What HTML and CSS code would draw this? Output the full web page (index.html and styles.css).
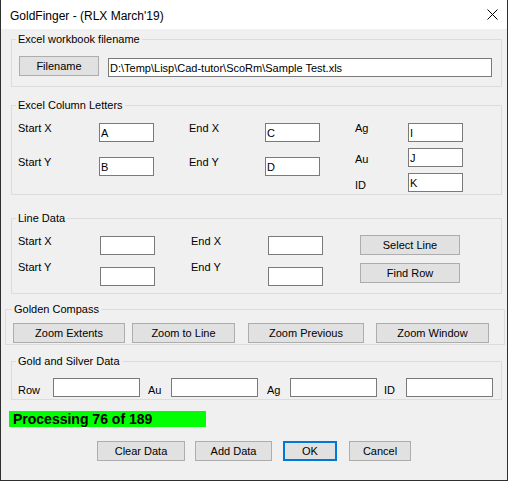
FILE: index.html
```html
<!DOCTYPE html>
<html lang="en">
<head>
  <meta charset="UTF-8">
  <title>GoldFinger</title>
  <link rel="stylesheet" href="styles.css">
</head>
<body>
  <div class="window">
    <div class="titlebar">
      <span class="title">GoldFinger - (RLX March'19)</span>
      <svg class="close" width="11" height="11" viewBox="0 0 11 11">
        <path d="M0.5 0.5 L10.5 10.5 M10.5 0.5 L0.5 10.5" stroke="#000" stroke-width="1" fill="none"/>
      </svg>
    </div>

    <div class="client">
      <fieldset class="group g-file">
        <legend>Excel workbook filename</legend>
        <div class="gbody file-row">
          <button class="btn btn-filename">Filename</button>
          <input class="txt txt-file" type="text" value="D:\Temp\Lisp\Cad-tutor\ScoRm\Sample Test.xls">
        </div>
      </fieldset>

      <fieldset class="group g-cols">
        <legend>Excel Column Letters</legend>
        <div class="gbody cols">
          <div class="lblcol pair w81"><span>Start X</span><span>Start Y</span></div>
          <div class="boxcol pair"><input class="txt" type="text" value="A"><input class="txt" type="text" value="B"></div>
          <div class="lblcol pair w76 sp35"><span>End X</span><span>End Y</span></div>
          <div class="boxcol pair"><input class="txt" type="text" value="C"><input class="txt" type="text" value="D"></div>
          <div class="lblcol trio w53 sp35"><span>Ag</span><span class="au">Au</span><span class="id">ID</span></div>
          <div class="boxcol trio"><input class="txt" type="text" value="I"><input class="txt" type="text" value="J"><input class="txt" type="text" value="K"></div>
        </div>
      </fieldset>

      <fieldset class="group g-line">
        <legend>Line Data</legend>
        <div class="gbody cols">
          <div class="lblcol line w82"><span>Start X</span><span>Start Y</span></div>
          <div class="boxcol line"><input class="txt" type="text"><input class="txt" type="text"></div>
          <div class="lblcol line w77 sp36"><span>End X</span><span>End Y</span></div>
          <div class="boxcol line"><input class="txt" type="text"><input class="txt" type="text"></div>
          <div class="btncol">
            <button class="btn btn-side">Select Line</button>
            <button class="btn btn-side">Find Row</button>
          </div>
        </div>
      </fieldset>

      <fieldset class="group g-compass">
        <legend>Golden Compass</legend>
        <div class="gbody zoom-row">
          <button class="btn z-ext">Zoom Extents</button>
          <button class="btn z-line">Zoom to Line</button>
          <button class="btn z-prev">Zoom Previous</button>
          <button class="btn z-win">Zoom Window</button>
        </div>
      </fieldset>

      <fieldset class="group g-data">
        <legend>Gold and Silver Data</legend>
        <div class="gbody data-row">
          <span class="dl w35">Row</span><input class="txt txt-data" type="text">
          <span class="dl w23 m8">Au</span><input class="txt txt-data" type="text">
          <span class="dl w23 m9">Ag</span><input class="txt txt-data" type="text">
          <span class="dl w22 m7">ID</span><input class="txt txt-data" type="text">
        </div>
      </fieldset>

      <div class="progress">Processing 76 of 189</div>

      <div class="actions">
        <button class="btn a-clear">Clear Data</button>
        <button class="btn a-add">Add Data</button>
        <button class="btn a-ok">OK</button>
        <button class="btn a-cancel">Cancel</button>
      </div>
    </div>
  </div>
</body>
</html>
```

FILE: styles.css
```css
* {
  box-sizing: border-box;
}
body {
  margin: 0;
  background: #f0f0f0;
  font-family: "Liberation Sans", Arial, sans-serif;
  font-size: 11px;
  line-height: 13px;
  color: #000;
}
.window {
  width: 508px;
  height: 481px;
  border: 1px solid #2f2f2f;
  border-top: none;
  background: #f0f0f0;
  display: flex;
  flex-direction: column;
}
.titlebar {
  flex: none;
  height: 29px;
  background: #fff;
  display: flex;
  align-items: flex-start;
  justify-content: space-between;
  padding: 0 9px 0 9px;
}
.title {
  font-size: 12px;
  line-height: 14px;
  margin-top: 9px;
}
.close {
  margin-top: 9px;
}
.client {
  display: flex;
  flex-direction: column;
}

/* group boxes */
.group {
  margin: 0;
  padding: 0;
  border: 1px solid #dcdcdc;
  min-width: 0;
}
.group legend {
  padding: 0 2px;
  margin-left: 4px;
  line-height: 13px;
}
.gbody {
  display: flex;
  align-items: flex-start;
}
.g-file {
  margin: 4px 0 0 10px;
  width: 491px;
  height: 54px;
}
.g-cols {
  margin: 12px 0 0 10px;
  width: 491px;
  height: 96px;
}
.g-line {
  margin: 17px 0 0 10px;
  width: 491px;
  height: 82px;
}
.g-compass {
  margin: 9px 0 0 4px;
  width: 500px;
  height: 42px;
}
.g-compass legend {
  margin-left: 6px;
}
.g-data {
  margin: 10px 0 0 10px;
  width: 491px;
  height: 45px;
}

/* controls */
.btn {
  height: 20px;
  padding: 0;
  border: 1px solid #adadad;
  background: #e1e1e1;
  font-family: inherit;
  font-size: 11px;
  line-height: 13px;
  color: #000;
}
.txt {
  height: 19px;
  width: 55px;
  padding: 0 1px;
  border: 1px solid #7a7a7a;
  background: #fff;
  font-family: inherit;
  font-size: 11px;
  color: #000;
  outline: none;
}

.file-row {
  padding: 10px 0 0 7px;
}
.btn-filename {
  width: 80px;
}
.txt-file {
  width: 384px;
  margin: 2px 0 0 9px;
}

.cols {
  padding-left: 6px;
}
.lblcol, .boxcol, .btncol {
  display: flex;
  flex-direction: column;
}
.lblcol {
  margin-top: 10px;
}
.boxcol {
  margin-top: 11px;
}
.lblcol.pair {
  gap: 21px;
}
.boxcol.pair {
  gap: 15px;
}
.boxcol.trio {
  gap: 6px;
}
.lblcol.trio .au {
  margin-top: 18px;
}
.lblcol.trio .id {
  margin-top: 13px;
}
.lblcol.line {
  gap: 13px;
}
.boxcol.line {
  gap: 12px;
}
.w81 { width: 81px; }
.w76 { width: 76px; }
.w53 { width: 53px; }
.w82 { width: 82px; }
.w77 { width: 77px; }
.sp35 { margin-left: 35px; }
.sp36 { margin-left: 36px; }

.btncol {
  margin: 10px 0 0 37px;
  gap: 8px;
}
.btn-side {
  width: 100px;
}

.zoom-row {
  padding: 7px 0 0 7px;
}
.z-ext { width: 112px; }
.z-line { width: 103px; margin-left: 7px; }
.z-prev { width: 116px; margin-left: 13px; }
.z-win { width: 113px; margin-left: 12px; }

.data-row {
  padding: 10px 0 0 6px;
}
.dl {
  margin-top: 6px;
}
.dl.w35 { width: 35px; }
.dl.w23 { width: 23px; }
.dl.w22 { width: 22px; }
.dl.m8 { margin-left: 8px; }
.dl.m9 { margin-left: 9px; }
.dl.m7 { margin-left: 7px; }
.txt-data {
  width: 87px;
}

.progress {
  margin: 11px 0 0 8px;
  width: 197px;
  height: 16px;
  padding-left: 4px;
  background: #00ff00;
  font-size: 14px;
  font-weight: bold;
  line-height: 16px;
}

.actions {
  display: flex;
  margin-top: 14px;
  padding-left: 96px;
}
.a-clear { width: 88px; }
.a-add { width: 77px; margin-left: 10px; }
.a-ok {
  width: 54px;
  margin-left: 11px;
  border: 2px solid #0078d7;
}
.a-cancel { width: 62px; margin-left: 12px; }
```
